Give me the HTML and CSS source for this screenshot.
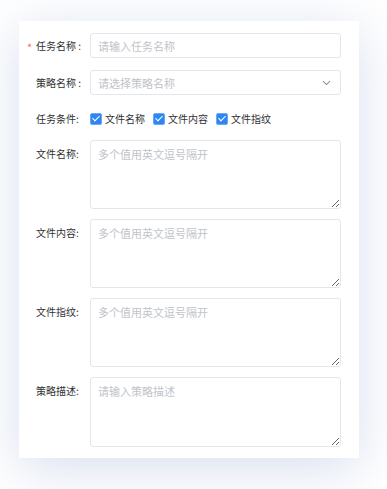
FILE: index.html
```html
<!DOCTYPE html>
<html lang="zh-CN">
<head>
  <meta charset="UTF-8">
  <meta name="viewport" content="width=device-width, initial-scale=1.0">
  <title>任务配置</title>
  <link rel="stylesheet" href="styles.css">
</head>
<body>
  <div class="card">
    <div class="row">
      <label class="label required">任务名称 :</label>
      <input class="field" type="text" placeholder="请输入任务名称">
    </div>

    <div class="row">
      <label class="label">策略名称 :</label>
      <div class="field select">
        <span>请选择策略名称</span>
        <svg width="9" height="6" viewBox="0 0 9 6"><path d="M1 1.2 L4.5 4.6 L8 1.2" fill="none" stroke="#8a8f99" stroke-width="1.1"/></svg>
      </div>
    </div>

    <div class="row checks">
      <label class="label">任务条件:</label>
      <div class="options">
        <span class="check"><i class="box"></i>文件名称</span>
        <span class="check"><i class="box"></i>文件内容</span>
        <span class="check"><i class="box"></i>文件指纹</span>
      </div>
    </div>

    <div class="row area">
      <label class="label">文件名称:</label>
      <textarea class="field" placeholder="多个值用英文逗号隔开"></textarea>
    </div>

    <div class="row area">
      <label class="label">文件内容:</label>
      <textarea class="field" placeholder="多个值用英文逗号隔开"></textarea>
    </div>

    <div class="row area">
      <label class="label">文件指纹:</label>
      <textarea class="field" placeholder="多个值用英文逗号隔开"></textarea>
    </div>

    <div class="row area last">
      <label class="label">策略描述:</label>
      <textarea class="field" placeholder="请输入策略描述"></textarea>
    </div>
  </div>
</body>
</html>
```

FILE: styles.css
```css
html, body {
  margin: 0;
  padding: 0;
}

body {
  background: #ffffff;
  font-family: "Noto Sans CJK SC", "Noto Sans", sans-serif;
  color: #303133;
  width: 387px;
  height: 489px;
  overflow: hidden;
}

.card {
  margin: 21px 0 0 19px;
  width: 340px;
  box-sizing: border-box;
  padding: 12px 18px 11px 17px;
  background: #fff;
  box-shadow: 0 10px 50px rgba(120, 145, 200, 0.3);
}

.row {
  display: flex;
  align-items: center;
  margin-bottom: 12px;
}

.row.area {
  align-items: flex-start;
  margin-bottom: 10px;
}

.row.last {
  margin-bottom: 0;
}

.label {
  position: relative;
  width: 54px;
  flex: none;
  font-size: 10px;
  line-height: 14px;
  color: #303133;
}

.row.area .label {
  padding-top: 7px;
}

.required::before {
  content: "*";
  position: absolute;
  left: -9px;
  top: 1px;
  color: #f56c6c;
  font-size: 11px;
}

.field {
  flex: 1;
  box-sizing: border-box;
  height: 25px;
  border: 1px solid #e4e6eb;
  border-radius: 3px;
  padding: 0 7px;
  font-family: inherit;
  font-size: 11px;
  color: #606266;
  background: #fff;
  outline: none;
}

.field::placeholder {
  color: #bfc3ca;
}

.select {
  display: flex;
  align-items: center;
  justify-content: space-between;
  color: #bfc3ca;
  padding-right: 9px;
}

textarea.field {
  height: 69px;
  padding: 5px 7px;
  line-height: 16px;
}

.row.last textarea.field {
  height: 70px;
}

.row.checks {
  height: 23px;
  margin-bottom: 10px;
}

.options {
  display: flex;
  gap: 8px;
}

.check {
  display: flex;
  align-items: center;
  font-size: 10px;
  color: #303133;
}

.box {
  width: 12px;
  height: 12px;
  box-sizing: border-box;
  border-radius: 2px;
  border: 1px solid #6aa8f5;
  background: #2f86f2;
  margin-right: 3px;
  position: relative;
}

.box::after {
  content: "";
  position: absolute;
  left: 3px;
  top: 0.5px;
  width: 3px;
  height: 6px;
  border: solid #fff;
  border-width: 0 1.5px 1.5px 0;
  transform: rotate(45deg);
}
```
